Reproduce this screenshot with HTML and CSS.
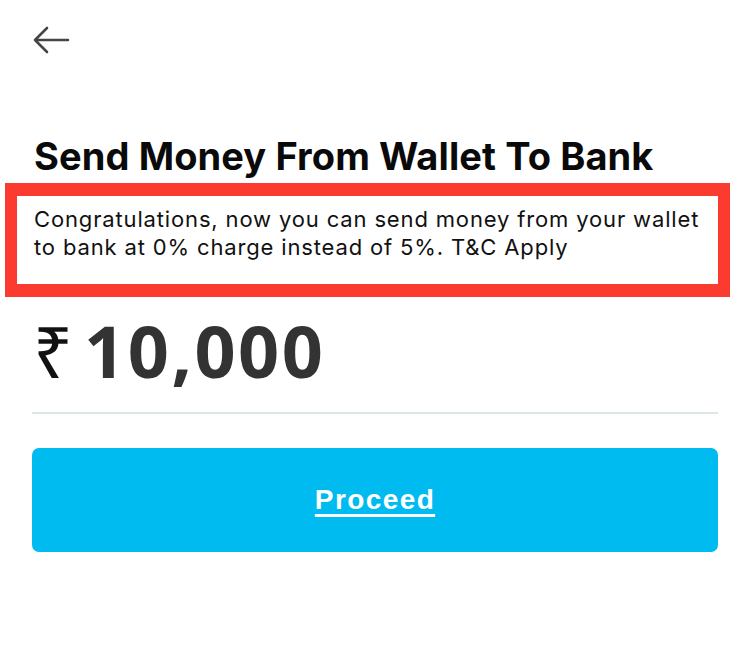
FILE: index.html
```html
<!DOCTYPE html>
<html lang="en">
<head>
  <meta charset="UTF-8">
  <meta name="viewport" content="width=device-width, initial-scale=1.0">
  <title>Send Money From Wallet To Bank</title>
  <link rel="stylesheet" href="styles.css">
</head>
<body>
  <div class="screen">
    <header class="topbar">
      <button class="back" aria-label="Back">
        <svg width="38" height="30" viewBox="0 0 38 30">
          <path d="M36 15 H3 M15 3 L3 15 L15 27" fill="none" stroke="#454545" stroke-width="2.6" stroke-linecap="round" stroke-linejoin="round"/>
        </svg>
      </button>
    </header>

    <h1 class="title">Send Money From Wallet To Bank</h1>

    <p class="notice">Congratulations, now you can send money from your wallet to bank at 0% charge instead of 5%. T&amp;C Apply</p>

    <div class="amount">
      <span class="currency">₹</span>
      <span class="value">10,000</span>
    </div>

    <button class="proceed">Proceed</button>
  </div>
</body>
</html>
```

FILE: styles.css
```css
body {
  margin: 0;
  background: #fff;
  font-family: Inter, "Noto Sans", sans-serif;
  color: #111;
}
.screen {
  padding: 0 32px;
}
.topbar {
  height: 100px;
  padding-top: 25px;
  box-sizing: border-box;
}
.back {
  background: none;
  border: none;
  padding: 0;
  cursor: pointer;
}
.title {
  margin: 34px 0 0 2px;
  font-size: 38px;
  line-height: 44px;
  font-weight: 700;
  letter-spacing: 0.1px;
  color: #0a0a0a;
}
.notice {
  margin: 5px -12px 0 -27px;
  border: solid #fb3b30;
  border-width: 13px 12px;
  padding: 9px 8px 23px 17px;
  font-size: 22px;
  line-height: 28px;
  letter-spacing: 0.85px;
  color: #111;
}
.amount {
  display: flex;
  align-items: baseline;
  gap: 11px;
  margin-top: 13px;
  padding: 0 1px 22px;
  border-bottom: 2px solid #dfe6ea;
}
.currency {
  font-family: "Noto Sans", "DejaVu Sans", sans-serif;
  font-size: 70px;
  line-height: 1;
  color: #111;
}
.value {
  font-family: "Open Sans", sans-serif;
  font-weight: 700;
  font-size: 72px;
  line-height: 80px;
  letter-spacing: 2.5px;
  color: #333;
}
.proceed {
  display: block;
  width: 100%;
  height: 104px;
  margin-top: 34px;
  border: none;
  border-radius: 7px;
  background: #00bbf0;
  color: #fff;
  font-family: "Liberation Sans", Arial, sans-serif;
  font-size: 28px;
  font-weight: 700;
  letter-spacing: 1.4px;
  text-decoration: underline;
  text-decoration-thickness: 3px;
  text-underline-offset: 5px;
  cursor: pointer;
}
```
